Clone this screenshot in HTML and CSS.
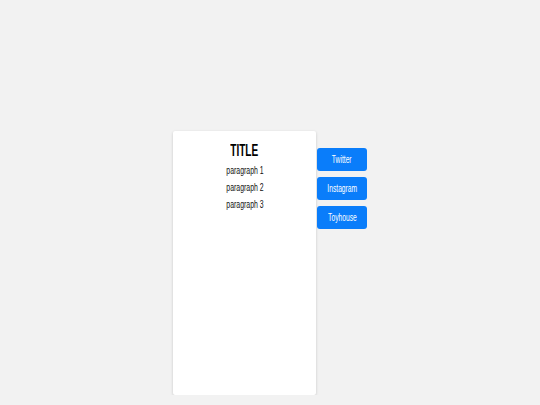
FILE: index.html
```html
<!DOCTYPE html>
<html>
<head>
<meta name="viewport" content="width=device-width, initial-scale=1">
<link rel="stylesheet" href="styles.css">
</head>
<body>

<div class="page">
  <div class="card">
    <h2 class="title"><span class="squeeze">TITLE</span></h2>
    <p><span class="squeeze">paragraph 1</span></p>
    <p><span class="squeeze">paragraph 2</span></p>
    <p><span class="squeeze">paragraph 3</span></p>
  </div>
  <div class="links">
    <a class="btn" href="#"><span class="squeeze">Twitter</span></a>
    <a class="btn" href="#"><span class="squeeze">Instagram</span></a>
    <a class="btn" href="#"><span class="squeeze">Toyhouse</span></a>
  </div>
</div>

</body>
</html>
```

FILE: styles.css
```css
* {
  box-sizing: border-box;
}

/* Light gray page, content starts a bit below the middle */
body {
  margin: 0;
  padding-top: 131px;
  font-family: "Liberation Sans", Arial, sans-serif;
  background: #f2f2f2;
  color: #111;
}

/* Card and the button column sit side by side, centered */
.page {
  display: flex;
  justify-content: center;
  align-items: flex-start;
  gap: 1px;
}

/* Narrow text look */
.squeeze {
  display: inline-block;
  transform: scaleX(0.67);
}

/* White card */
.card {
  width: 143px;
  height: 264px;
  padding-top: 10px;
  background: #fff;
  border-radius: 2px;
  box-shadow: 0 1px 3px rgba(0, 0, 0, 0.18);
  text-align: center;
}

.title {
  margin: 0 0 1px;
  font-size: 16px;
  line-height: 20px;
  font-weight: bold;
  color: #000;
}

.title .squeeze {
  transform: scaleX(0.63);
}

.card p {
  margin: 0;
  font-size: 10px;
  line-height: 17px;
}

.card p .squeeze {
  transform: scaleX(0.69);
}

/* Social buttons */
.links {
  display: flex;
  flex-direction: column;
  gap: 6px;
  margin-top: 17px;
}

.btn {
  display: block;
  width: 50px;
  height: 23px;
  line-height: 23px;
  font-size: 10px;
  text-align: center;
  text-decoration: none;
  color: #fff;
  background: #0a7dfa;
  border-radius: 3px;
}
```
